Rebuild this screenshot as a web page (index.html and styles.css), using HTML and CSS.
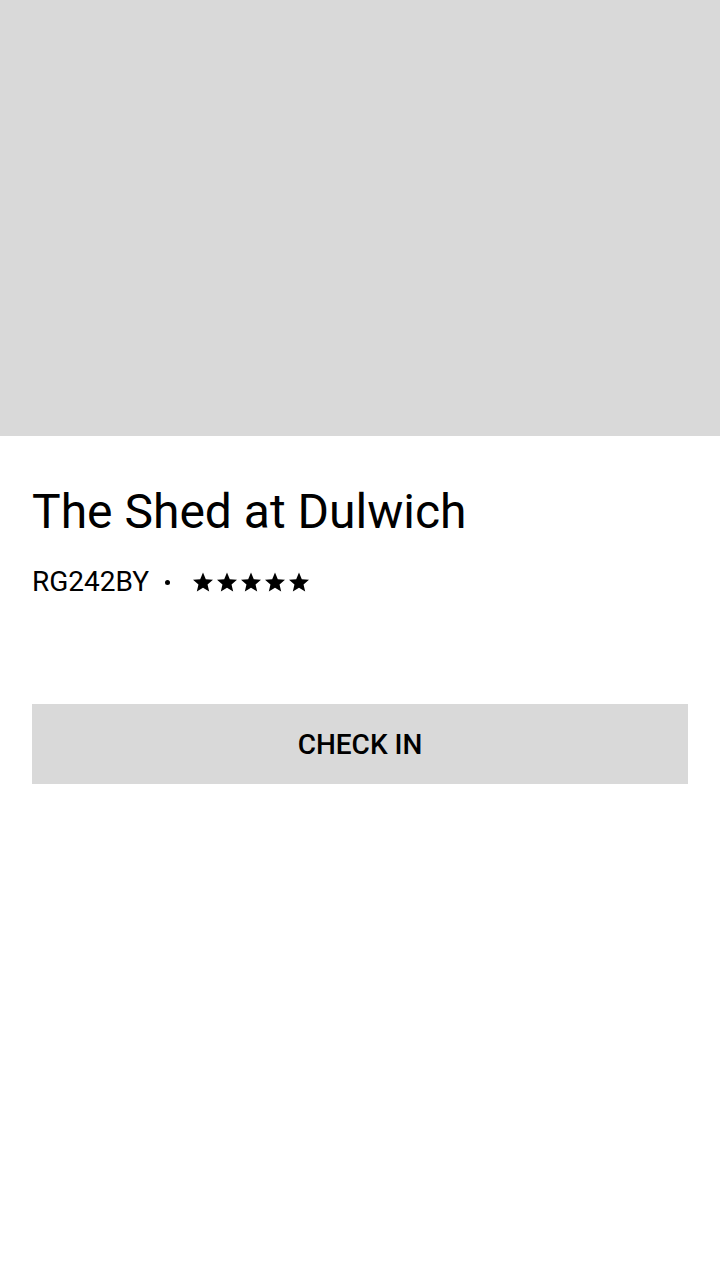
FILE: index.html
```html
<!DOCTYPE html>
<html>
<head>
<meta charset="utf-8">
<link rel="stylesheet" href="styles.css">
</head>
<body>
<div class="hero"></div>
<div class="content">
  <h1 class="title">The Shed at Dulwich</h1>
  <div class="meta">
    <span class="code">RG242BY</span>
    <span class="dot"></span>
    <span class="stars">
      <svg viewBox="1 1.5 22 21" class="star"><path d="M12 17.27L18.18 21l-1.64-7.03L22 9.24l-7.19-.61L12 2 9.19 8.63 2 9.24l5.46 4.73L5.82 21z"/></svg>
      <svg viewBox="1 1.5 22 21" class="star"><path d="M12 17.27L18.18 21l-1.64-7.03L22 9.24l-7.19-.61L12 2 9.19 8.63 2 9.24l5.46 4.73L5.82 21z"/></svg>
      <svg viewBox="1 1.5 22 21" class="star"><path d="M12 17.27L18.18 21l-1.64-7.03L22 9.24l-7.19-.61L12 2 9.19 8.63 2 9.24l5.46 4.73L5.82 21z"/></svg>
      <svg viewBox="1 1.5 22 21" class="star"><path d="M12 17.27L18.18 21l-1.64-7.03L22 9.24l-7.19-.61L12 2 9.19 8.63 2 9.24l5.46 4.73L5.82 21z"/></svg>
      <svg viewBox="1 1.5 22 21" class="star"><path d="M12 17.27L18.18 21l-1.64-7.03L22 9.24l-7.19-.61L12 2 9.19 8.63 2 9.24l5.46 4.73L5.82 21z"/></svg>
    </span>
  </div>
  <button class="checkin">CHECK IN</button>
</div>
</body>
</html>
```
FILE: styles.css
```css
html, body {
  margin: 0;
  padding: 0;
  background: #ffffff;
  font-family: Roboto, "Noto Sans", sans-serif;
  color: #000;
}
.hero {
  height: 436px;
  background: #d9d9d9;
}
.content {
  padding: 0 32px;
  display: flex;
  flex-direction: column;
}
.title {
  margin: 44px 0 0 0;
  font-size: 48px;
  font-weight: 400;
  line-height: 64px;
}
.meta {
  display: flex;
  align-items: center;
  margin-top: 22px;
  height: 32px;
}
.code {
  font-size: 28px;
  line-height: 32px;
}
.dot {
  width: 5px;
  height: 5px;
  border-radius: 50%;
  background: #000;
  margin: 0 22px 0 16px;
}
.stars {
  display: flex;
  gap: 2px;
}
.star {
  width: 22px;
  height: 21px;
  fill: #000;
}
.checkin {
  margin-top: 106px;
  height: 80px;
  border: none;
  background: #d9d9d9;
  font-family: Roboto, sans-serif;
  font-size: 28px;
  font-weight: 500;
  color: #000;
  padding: 0;
}
```
